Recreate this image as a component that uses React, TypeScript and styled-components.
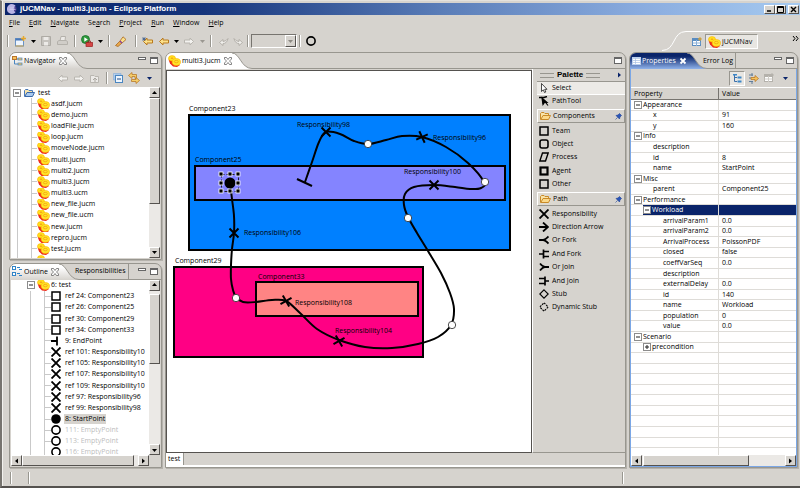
import React from "react";
import styled, { createGlobalStyle, css } from "styled-components";

const face = "#d6d3ce";
const line = "#98968f";
const navy = "#0a246a";

const GlobalStyle = createGlobalStyle`
  * { box-sizing: border-box; }
  html, body { margin: 0; padding: 0; height: 100%; overflow: hidden; }
  body, button, select, table {
    font-family: "Open Sans", Tahoma, sans-serif;
    font-size: 7px;
    line-height: 10px;
    color: #000;
  }
  button { border: 0; padding: 0; margin: 0; background: none; }
  ul { list-style: none; margin: 0; padding: 0; }
  svg { display: block; flex: none; }
`;

/* ---------- window frame ---------- */

const Shell = styled.div`
  display: flex;
  flex-direction: column;
  height: 100vh;
  background: ${face};
  border-top: 1px solid #e4e2dd;
  border-bottom: 2px solid #55524f;
  border-left: 2px solid #77746f;
  padding: 2px 0 0 3px;
  box-shadow: inset 1px 0 0 #f2f1ee;
`;

const TitleBar = styled.header`
  display: flex;
  align-items: center;
  gap: 3px;
  flex: none;
  height: 12px;
  padding: 0 1px 0 2px;
  background: linear-gradient(90deg, ${navy}, #16357c 25%, #5a7db8 55%, #8aacdf 80%, #a6caf0);
  color: #fff;
`;

const Title = styled.h1`
  flex: 1;
  margin: 0;
  font-family: "Liberation Sans", Arial, sans-serif;
  font-size: 8px;
  line-height: 12px;
  font-weight: bold;
  white-space: nowrap;
`;

const raised = css`
  background: ${face};
  border: 1px solid;
  border-color: #fff #55524f #55524f #fff;
`;

const WindowButton = styled.button`
  ${raised}
  display: grid;
  place-items: center;
  width: 11px;
  height: 9px;
`;

const WindowButtons = styled.div`
  display: flex;
  button:last-child { margin-left: 2px; }
`;

const MenuBar = styled.nav`
  display: flex;
  align-items: center;
  flex: none;
  height: 16px;
  padding-left: 4px;
  gap: 9px;
`;

const MenuItem = styled.button`
  u { text-underline-offset: 1px; }
`;

const ToolRow = styled.div`
  display: flex;
  align-items: flex-end;
  flex: none;
  height: 20px;
`;

const Tools = styled.div`
  display: flex;
  align-items: center;
  height: 20px;
  flex: 1;
`;

const Tool = styled.button<{ $w: number }>`
  display: grid;
  place-items: center;
  width: ${(p) => p.$w}px;
  height: 14px;
`;

const Sep = styled.span`
  width: 2px;
  height: 12px;
  margin: 0 2px;
  border-left: 1px solid ${line};
  border-right: 1px solid #fff;
`;

const Combo = styled.label`
  display: flex;
  width: 46px;
  height: 14px;
  border: 1px solid;
  border-color: #77746f #fff #fff #77746f;
  select {
    flex: 1;
    min-width: 0;
    appearance: none;
    border: 0;
    background: ${face};
  }
`;

const ComboArrow = styled.span`
  ${raised}
  display: grid;
  place-items: center;
  width: 11px;
`;

const Perspectives = styled.div`
  display: flex;
  align-items: center;
  height: 20px;
  width: 138px;
`;

const PerspectiveSwoosh = styled.svg`
  width: 24px;
  height: 20px;
`;

const PerspectiveList = styled.div`
  display: flex;
  align-items: center;
  flex: 1;
  height: 20px;
  gap: 3px;
  padding-left: 5px;
  border-top: 1px solid #fff;
`;

const PerspectiveButton = styled.button`
  display: flex;
  align-items: center;
  gap: 1px;
  width: 53px;
  height: 15px;
  padding-left: 2px;
  background: #e8e6e2;
  border: 1px solid;
  border-color: ${line} #fff #fff ${line};
`;

const More = styled.button`
  margin-left: auto;
  align-self: flex-start;
  margin-right: 1px;
`;

/* ---------- workbench ---------- */

const Workbench = styled.main`
  display: grid;
  grid-template-columns: 153px minmax(0, 1fr) 169px;
  gap: 3px;
  flex: 1;
  min-height: 0;
  padding: 1px 2px 1px 4px;
`;

const Stack = styled.div`
  display: flex;
  flex-direction: column;
  gap: 3px;
  min-height: 0;
`;

const Panel = styled.section<{ $grow: number }>`
  display: flex;
  flex-direction: column;
  flex: ${(p) => p.$grow} 1 0;
  min-height: 0;
  min-width: 0;
  overflow: hidden;
  border: 1px solid ${line};
  border-radius: 7px 7px 0 0;
  box-shadow: 1px 1px 0 #b5b2ac;
`;

const PanelBody = styled.div<{ $focus?: boolean }>`
  display: flex;
  flex-direction: column;
  flex: 1;
  min-height: 0;
  border: 1px solid ${(p) => (p.$focus ? "#7ba7e6" : face)};
  border-top: 0;
`;

const TabBar = styled.div`
  display: flex;
  flex: none;
  height: 16px;
`;

const TabFill = styled.div<{ $bg: string }>`
  display: flex;
  align-items: center;
  gap: 1px;
  padding-left: 2px;
  background: ${(p) => p.$bg};
  white-space: nowrap;
`;

const TabLabel = styled.button<{ $light?: boolean }>`
  color: ${(p) => (p.$light ? "#fff" : "#000")};
  white-space: nowrap;
`;

const RestTabs = styled.div`
  display: flex;
  align-items: center;
  flex: 1;
  border-bottom: 1px solid ${line};
`;

const IdleTab = styled.button`
  height: 15px;
  margin-left: -4px;
  padding-right: 2px;
  border-right: 1px solid ${line};
  white-space: nowrap;
`;

const SizeButtons = styled.div`
  display: flex;
  align-items: flex-start;
  gap: 4px;
  margin-left: auto;
  padding-right: 3px;
`;

const ViewTools = styled.div`
  display: flex;
  align-items: center;
  justify-content: flex-end;
  flex: none;
  height: 18px;
  padding-right: 3px;
`;

const Pressed = styled.button`
  display: grid;
  place-items: center;
  width: 16px;
  height: 15px;
  background: #e8e6e2;
  border: 1px solid;
  border-color: ${line} #fff #fff ${line};
`;

/* ---------- scroll bars ---------- */

const Bar = styled.div<{ $dir: "row" | "column" }>`
  display: flex;
  flex-direction: ${(p) => p.$dir};
  flex: none;
  ${(p) => (p.$dir === "row" ? "height: 11px;" : "width: 11px;")}
  background: #ebe9e6;
`;

const BarButton = styled.button`
  ${raised}
  display: grid;
  place-items: center;
  flex: none;
  width: 11px;
  height: 11px;
`;

const Track = styled.div<{ $grow: number }>`
  flex: ${(p) => p.$grow} 1 0;
`;

const Thumb = styled(Track)`
  ${raised}
`;

const arrows = {
  up: "M1 4L3.500 1L6 4Z",
  down: "M1 2L3.500 5L6 2Z",
  left: "M2 3L5 0.500V5.500Z",
  right: "M2 0.500L5 3L2 5.500Z",
};

function Arrow({ to, color = "#000" }: { to: keyof typeof arrows; color?: string }) {
  return (
    <svg width="7" height="6" viewBox="0 0 7 6">
      <path d={arrows[to]} fill={color} />
    </svg>
  );
}

function ScrollBar({ dir, before, thumb, after }: { dir: "row" | "column"; before: number; thumb: number; after: number }) {
  return (
    <Bar $dir={dir}>
      <BarButton aria-label="Scroll back" type="button">
        <Arrow to={dir === "row" ? "left" : "up"} />
      </BarButton>
      <Track $grow={before} />
      <Thumb $grow={thumb} />
      <Track $grow={after} />
      <BarButton aria-label="Scroll forward" type="button">
        <Arrow to={dir === "row" ? "right" : "down"} />
      </BarButton>
    </Bar>
  );
}

/* ---------- icons ---------- */

const JucmIcon = () => (
  <svg width="13" height="12" viewBox="0 0 13 12">
    <path d="M0.500 4.500L2 8.500L5 11.500L9 12L12 10L6 5Z" fill="#ee2a1c" />
    <ellipse cx="4" cy="3.300" rx="3.500" ry="2.700" fill="#ffe21f" stroke="#fbb400" strokeWidth="0.600" />
    <ellipse cx="4" cy="3.200" rx="1.300" ry="0.600" fill="#f59a10" />
    <ellipse cx="8.300" cy="7" rx="4.200" ry="3.400" fill="#ffe52a" stroke="#fbb400" strokeWidth="0.600" />
    <ellipse cx="8.300" cy="6.600" rx="2" ry="1.200" fill="none" stroke="#f5a010" strokeWidth="0.800" />
  </svg>
);

const FolderIcon = ({ blue }: { blue?: boolean }) => (
  <svg width="11" height="10" viewBox="0 0 11 10">
    <path d="M0.500 8.500V2.500L1.500 1.500H4L5 2.500H8.500V4.500" fill="#f9e4a8" stroke={blue ? "#4a78b8" : "#c98a28"} />
    <path d="M0.800 8.500L3 4.500H10.500L8.500 8.500Z" fill={blue ? "#a9c9ee" : "#fbd98a"} stroke={blue ? "#3a68a8" : "#c98a28"} />
  </svg>
);

const CloseX = ({ light }: { light?: boolean }) =>
  light ? (
    <svg width="8" height="8" viewBox="0 0 8 8">
      <path d="M1.500 1.500L6.500 6.500M6.500 1.500L1.500 6.500" stroke="#fff" strokeWidth="1.800" />
    </svg>
  ) : (
    <svg width="8" height="8" viewBox="0 0 8 8">
      <path
        d="M0.500 0.500H2.500L4 2.500L5.500 0.500H7.500V2L5.500 4L7.500 6V7.500H5.500L4 5.500L2.500 7.500H0.500V6L2.500 4L0.500 2Z"
        fill="#fff"
        stroke="#666"
        strokeWidth="0.800"
      />
    </svg>
  );

const MinIcon = () => (
  <svg width="8" height="9" viewBox="0 0 8 9">
    <rect x="0.500" y="1.500" width="7" height="2" fill="#fff" stroke="#666" />
  </svg>
);

const MaxIcon = () => (
  <svg width="8" height="9" viewBox="0 0 8 9">
    <rect x="0.500" y="1.500" width="7" height="6" fill="#fff" stroke="#666" />
    <path d="M0.500 2.500H7.500" stroke="#666" />
  </svg>
);

const NavArrow = ({ back, color = "#b9b6b0", fill = "#f3f2ef", star }: { back?: boolean; color?: string; fill?: string; star?: boolean }) => (
  <svg width="12" height="9" viewBox="0 0 12 9">
    <path
      d={back ? "M1.500 4.500L5 1V3H10.500V6H5V8Z" : "M10.500 4.500L7 1V3H1.500V6H7V8Z"}
      fill={fill}
      stroke={color}
    />
    {star && <path d="M2 0V4M0 2H4M0.500 0.500L3.500 3.500M3.500 0.500L0.500 3.500" stroke="#2e5288" strokeWidth="0.600" />}
  </svg>
);

const HierarchyIcon = () => (
  <svg width="11" height="10" viewBox="0 0 11 10">
    <path d="M2.500 3V8H6M2.500 3H6" fill="none" stroke="#4a86c0" />
    <rect x="0.500" y="0.500" width="4" height="3" fill="#f6c35e" stroke="#b9742a" />
    <rect x="6" y="2" width="4" height="2" fill="#f6c35e" stroke="#4a86c0" strokeWidth="0.700" />
    <rect x="6" y="7" width="4" height="2" fill="#f6c35e" stroke="#4a86c0" strokeWidth="0.700" />
  </svg>
);

const TreeListIcon = () => (
  <svg width="9" height="9" viewBox="0 0 9 9">
    <path d="M1.500 0V7.500H4M1.500 3.500H4" fill="none" stroke="#3b6ea8" />
    <path d="M4.500 3.500H8.500M4.500 7.500H8.500M0 0.500H4" stroke="#3b86c8" strokeWidth="2" />
  </svg>
);

const OutlineIcon = () => (
  <svg width="11" height="11" viewBox="0 0 11 11">
    <rect x="0.500" y="0.500" width="3" height="3" fill="#fff" stroke="#2f84c8" />
    <rect x="0.500" y="6.500" width="3" height="3" fill="#fff" stroke="#2f84c8" />
    <path d="M5 1.500H8M7 3.500H10M5 7.500H8M7 9.500H10" stroke="#2f84c8" />
  </svg>
);

const CollapseIcon = () => (
  <svg width="10" height="10" viewBox="0 0 10 10">
    <path d="M0.500 0.500H8V2H2V7H0.500Z" fill="#bcd6f2" stroke="#7fa8d6" strokeWidth="0.600" />
    <rect x="2.500" y="2.500" width="7" height="7" fill="#eef5fd" stroke="#4a86c0" />
    <path d="M4 6H8" stroke="#1d4a88" />
  </svg>
);

const LinkIcon = () => (
  <svg width="12" height="12" viewBox="0 0 12 12">
    <path d="M0.500 3.500L4 0.500V2.500H8.500V6.500H7V4.500H4V6.500Z" fill="#f6cf6a" stroke="#b97a2a" strokeWidth="0.800" />
    <path d="M11.500 8.500L8 5.500V7.500H3.500V9.500H8V11.500Z" fill="#f6cf6a" stroke="#b97a2a" strokeWidth="0.800" />
  </svg>
);

const UpFolderIcon = () => (
  <svg width="10" height="9" viewBox="0 0 10 9">
    <path d="M0.500 8.500V1.500H4L5 2.500H8.500V8.500Z" fill="#eceae7" stroke="#b9b6b0" />
    <path d="M5 8V4M3 6L5 4L7 6" fill="none" stroke="#aaa7a1" />
  </svg>
);

const NewIcon = () => (
  <svg width="12" height="11" viewBox="0 0 12 11">
    <rect x="1.500" y="2.500" width="8" height="7.500" fill="#eef5fd" stroke="#6a93c4" />
    <path d="M1.500 3.500H9.500" stroke="#4a78b8" strokeWidth="2" />
    <path d="M1.500 10H9.500" stroke="#c9a24a" />
    <path d="M9.500 0V5M7 2.500H12" stroke="#e5a82c" strokeWidth="1.500" />
  </svg>
);

const SaveIcon = () => (
  <svg width="10" height="10" viewBox="0 0 10 10">
    <path d="M0.500 0.500H9.500V9.500H0.500Z" fill="#c6c3be" stroke="#aeaba5" />
    <path d="M2.500 1H7.500V4H2.500ZM3 6H7V9.500H3Z" fill="#eceae7" />
  </svg>
);

const PrintIcon = () => (
  <svg width="11" height="10" viewBox="0 0 11 10">
    <path d="M3 5L4 0.500H8.500L8 5" fill="#eceae7" stroke="#b4b1ab" />
    <path d="M0.500 5.500L2 4.500H9L10.500 5.500V8.500H0.500Z" fill="#d0cdc8" stroke="#b4b1ab" />
  </svg>
);

const RunIcon = () => (
  <svg width="12" height="12" viewBox="0 0 12 12">
    <circle cx="4.500" cy="4.500" r="4" fill="#2f9a3c" stroke="#15702a" strokeWidth="0.800" />
    <path d="M3.300 2.300V6.700L6.800 4.500Z" fill="#fff" />
    <rect x="5" y="7.500" width="6.500" height="4" fill="#d64545" stroke="#9a1f1f" strokeWidth="0.700" />
    <path d="M7 7.500V6H9.500V7.500" fill="none" stroke="#9a1f1f" strokeWidth="0.800" />
  </svg>
);

const TorchIcon = () => (
  <svg width="12" height="11" viewBox="0 0 12 11">
    <path d="M0.500 9.500L5 5L7 7L3 10.500Z" fill="#e9a94e" stroke="#a8681f" strokeWidth="0.800" />
    <path d="M5 5L8 0.800L11 3.500L7 7Z" fill="#fbe08a" stroke="#a8681f" strokeWidth="0.800" />
    <path d="M5 5L7 7" stroke="#8a3fa0" strokeWidth="1.200" />
  </svg>
);

const UndoIcon = ({ flip }: { flip?: boolean }) => (
  <svg width="10" height="9" viewBox="0 0 10 9">
    <path
      d={flip ? "M1 1.500Q3 4.500 6 4.500V2.500L9.500 5.500L6 8.500V6.500Q2 6.500 1 1.500Z" : "M9 1.500Q7 4.500 4 4.500V2.500L0.500 5.500L4 8.500V6.500Q8 6.500 9 1.500Z"}
      fill="#f0efec"
      stroke="#a9a6a0"
      strokeWidth="0.800"
    />
  </svg>
);

const GridIcon = ({ dim }: { dim?: boolean }) => (
  <svg width="10" height="10" viewBox="0 0 10 10">
    <rect x="0.500" y="1.500" width="8" height="7" fill="#fff" stroke={dim ? "#b4b1ab" : "#5a8cc0"} />
    <path d="M0.500 3H8.500" stroke={dim ? "#b4b1ab" : "#5a8cc0"} strokeWidth="2" />
    <path d="M4.500 3V9M0.500 6H8.500" stroke={dim ? "#cfccc7" : "#8ab0d8"} />
    <path d="M8 0V4M6 2H10" stroke={dim ? "#b4b1ab" : "#e0a52e"} />
  </svg>
);

const TableIcon = () => (
  <svg width="9" height="8" viewBox="0 0 9 8">
    <rect x="0.500" y="0.500" width="8" height="7" fill="#fff" stroke="#bcd0ee" />
    <path d="M1 1.500H8M3.500 1V7M1 3.500H8M1 5.500H8" stroke="#a8c0e4" strokeWidth="0.700" />
  </svg>
);

const FilterIcon = () => (
  <svg width="11" height="11" viewBox="0 0 11 11">
    <path d="M1 2H5M1 5H3M1 8.500H5M4 0V3M4 8V11" stroke="#5f7d9c" />
    <path d="M3 4.500H7V2.500L10.500 5.500L7 8.500V6.500H3Z" fill="#f6c35e" stroke="#b97a2a" strokeWidth="0.800" />
  </svg>
);

const EclipseIcon = () => (
  <svg width="10" height="10" viewBox="0 0 10 10">
    <circle cx="5" cy="5" r="4.500" fill="#4b3d8f" />
    <path d="M8.500 1.500A5 5 0 1 0 8.500 8.500A4.300 4.300 0 0 1 8.500 1.500Z" fill="#b9b4e4" />
    <path d="M3 4H8M2.500 5.500H8.500" stroke="#d8d4f2" strokeWidth="0.700" />
  </svg>
);

const PinIcon = () => (
  <svg width="7" height="7" viewBox="0 0 7 7">
    <path d="M0.500 6.500L2.500 4.500M1 2.500L4.500 6L5 4L6.500 2.500L4.500 0.500L3 2Z" fill="#2b56b8" stroke="#1c3f96" strokeWidth="0.600" />
  </svg>
);

type Glyph =
  | "square" | "round" | "slant" | "thick" | "x" | "arrow" | "orFork" | "andFork"
  | "orJoin" | "andJoin" | "stub" | "dynStub" | "end" | "dot" | "ring" | "cursor" | "pathTool";

const glyphs: Record<Glyph, React.ReactNode> = {
  square: <rect x="1" y="1" width="8" height="8" strokeWidth="1.500" />,
  round: <rect x="1" y="1" width="8" height="8" rx="2" strokeWidth="1.600" />,
  slant: <path d="M3.500 1H9.200L6.500 9H0.800Z" strokeWidth="1.400" />,
  thick: <rect x="1.500" y="1.500" width="7" height="7" strokeWidth="2.200" />,
  x: <path d="M0.500 0.500L9.500 9.500M9.500 0.500L0.500 9.500" strokeWidth="1.900" />,
  arrow: <path d="M0 5H9M4 0.500L9 5L4 9.500" strokeWidth="1.800" />,
  orFork: <path d="M0 5H4Q6 5 9.500 1.500M4 5Q6 5 9.500 8.500" strokeWidth="1.800" />,
  andFork: <path d="M0 5H4M4.500 0.500V9.500M4.500 2.500H10M4.500 7.500H10" strokeWidth="1.700" />,
  orJoin: <path d="M10 5H6Q4 5 1 1.500M6 5Q4 5 1 8.500" strokeWidth="1.800" />,
  andJoin: <path d="M10 5H6M6 0.500V9.500M6 2.500H0M6 7.500H0" strokeWidth="1.700" />,
  stub: <path d="M5 0.800L9.200 5L5 9.200L0.800 5Z" strokeWidth="1.100" />,
  dynStub: <path d="M5 0.800L9.200 5L5 9.200L0.800 5Z" strokeWidth="1.100" strokeDasharray="2 1" />,
  end: <path d="M0 5H6M6 0.500V9.500" strokeWidth="1.800" />,
  dot: <circle cx="5" cy="5" r="4.800" fill="#000" stroke="none" />,
  ring: <circle cx="5" cy="5" r="4.100" strokeWidth="1.600" />,
  cursor: <path d="M2.500 0.500V8.500L4.300 6.800L5.500 9.500L6.800 9L5.700 6.300H8Z" fill="#fff" strokeWidth="0.700" />,
  pathTool: (
    <>
      <path d="M3 2L9 9.500M3 2L4 8.500L5.500 6.500L8 6.500Z" fill="#000" strokeWidth="1.200" />
      <path d="M0 1.500H5L8 0.500" strokeWidth="1.500" />
    </>
  ),
};

const GlyphIcon = ({ kind }: { kind: Glyph }) => (
  <svg width="10" height="10" viewBox="0 0 10 10" fill="none" stroke="#000">
    {glyphs[kind]}
  </svg>
);

/* ---------- trees ---------- */

const TreeArea = styled.div`
  display: flex;
  flex: 1;
  min-height: 0;
  background: #fff;
`;

const Tree = styled.ul`
  display: flex;
  flex-direction: column;
  flex: 1;
  min-width: 0;
  overflow: hidden;
`;

const TreeRow = styled.li<{ $clip?: number }>`
  display: flex;
  flex: ${(p) => (p.$clip ? `0 0 ${p.$clip}px` : "1 1 0")};
  align-items: ${(p) => (p.$clip ? "flex-start" : "center")};
  min-height: 0;
  overflow: hidden;
  padding-left: 6px;
  white-space: nowrap;
`;

const RootRow = styled(TreeRow)`
  padding-left: 2px;
`;

const Guide = styled.span<{ $w: number; $stub?: boolean }>`
  flex: none;
  align-self: stretch;
  width: ${(p) => p.$w}px;
  border-left: 1px solid #c9c9c9;
  background: ${(p) => (p.$stub ? "linear-gradient(#c9c9c9, #c9c9c9) center / 100% 1px no-repeat" : "none")};
`;

const Indent = styled.span<{ $w: number }>`
  flex: none;
  width: ${(p) => p.$w}px;
`;

const Expander = ({ plus }: { plus?: boolean }) => (
  <svg width="8" height="8" viewBox="0 0 8 8">
    <rect x="0.500" y="0.500" width="7" height="7" fill="#fff" stroke="#8c8c8c" />
    <path d={plus ? "M2 4H6M4 2V6" : "M2 4H6"} stroke="#222" />
  </svg>
);

const TreeText = styled.span<{ $picked?: boolean; $dim?: boolean }>`
  padding: 0 1px;
  color: ${(p) => (p.$dim ? "#bdbdbd" : "#000")};
  background: ${(p) => (p.$picked ? face : "transparent")};
`;

const files = [
  "asdf.jucm", "demo.jucm", "loadFile.jucm", "loop.jucm", "moveNode.jucm", "multi.jucm", "multi2.jucm",
  "multi3.jucm", "multi3.ucm", "new_file.jucm", "new_file.ucm", "new.jucm", "repro.jucm", "test.jucm",
];

const outline: { kind: Glyph; text: string; dim?: boolean; picked?: boolean }[] = [
  { kind: "square", text: "ref 24: Component23" },
  { kind: "square", text: "ref 26: Component25" },
  { kind: "square", text: "ref 30: Component29" },
  { kind: "square", text: "ref 34: Component33" },
  { kind: "end", text: "9: EndPoint" },
  { kind: "x", text: "ref 101: Responsibility10" },
  { kind: "x", text: "ref 105: Responsibility10" },
  { kind: "x", text: "ref 107: Responsibility10" },
  { kind: "x", text: "ref 109: Responsibility10" },
  { kind: "x", text: "ref 97: Responsibility96" },
  { kind: "x", text: "ref 99: Responsibility98" },
  { kind: "dot", text: "8: StartPoint", picked: true },
  { kind: "ring", text: "111: EmptyPoint", dim: true },
  { kind: "ring", text: "113: EmptyPoint", dim: true },
];

/* ---------- tab header ---------- */

const paperTab = `linear-gradient(#ffffff 20%, ${face})`;

function TabHead(props: {
  icon: React.ReactNode;
  label: string;
  tone?: "paper" | "white" | "blue";
  next?: string;
  onlyMax?: boolean;
}) {
  const tone = props.tone ?? "paper";
  const id = `tab-${tone}`;
  const stops = tone === "paper" ? ["#fff", face] : tone === "white" ? ["#fff", "#fff"] : [navy, "#8fb2ea"];
  const bg = tone === "paper" ? paperTab : tone === "white" ? "#fff" : `linear-gradient(${navy} 20%, #8fb2ea)`;
  return (
    <TabBar role="tablist">
      <TabFill $bg={bg}>
        {props.icon}
        <TabLabel $light={tone === "blue"} role="tab" aria-selected="true" type="button">{props.label}</TabLabel>
        <Indent $w={1} />
        <button aria-label={`Close ${props.label}`} type="button"><CloseX light={tone === "blue"} /></button>
      </TabFill>
      <svg width="20" height="16" viewBox="0 0 20 16">
        <defs>
          <linearGradient id={id} gradientUnits="userSpaceOnUse" x1="0" y1="0" x2="0" y2="16">
            <stop offset="0.200" stopColor={stops[0]} />
            <stop offset="1" stopColor={stops[1]} />
          </linearGradient>
        </defs>
        <path d="M0 0C8 0 9 15.500 20 15.500V16H0Z" fill={`url(#${id})`} />
        <path d="M0 0C8 0 9 15.500 20 15.500" fill="none" stroke={line} />
      </svg>
      <RestTabs>
        {props.next && <IdleTab role="tab" aria-selected="false" type="button">{props.next}</IdleTab>}
        <SizeButtons>
          {!props.onlyMax && <button aria-label="Minimize view" type="button"><MinIcon /></button>}
          <button aria-label="Maximize view" type="button"><MaxIcon /></button>
        </SizeButtons>
      </RestTabs>
    </TabBar>
  );
}

/* ---------- editor ---------- */

const EditorArea = styled.div`
  display: flex;
  flex: 1;
  min-height: 0;
  padding-top: 1px;
`;

const Canvas = styled.div`
  flex: 1;
  min-width: 0;
  background: #fff;
  border: 1px solid #55524f;
  overflow: hidden;
  svg { width: 100%; height: 100%; }
`;

const PageTabs = styled.div`
  display: flex;
  flex: none;
  height: 14px;
  border-bottom: 2px solid #fff;
  button {
    height: 12px;
    padding: 0 3px 0 2px;
    background: #fff;
    border-right: 1px solid ${line};
  }
`;

const Palette = styled.aside`
  display: flex;
  flex-direction: column;
  flex: none;
  width: 93px;
  margin-top: -1px;
  padding-left: 4px;
  border-left: 1px solid #fff;
  border-bottom: 1px solid ${line};
`;

const PaletteHead = styled.div`
  display: flex;
  align-items: center;
  gap: 3px;
  height: 12px;
  padding: 0 2px 0 3px;
  font-family: "Liberation Sans", Arial, sans-serif;
  font-size: 8px;
  font-weight: bold;
  svg { margin-left: auto; }
`;

const Grip = styled.span`
  width: 14px;
  height: 5px;
  border-top: 1px solid ${line};
  border-bottom: 1px solid ${line};
`;

const Drawer = styled.h2`
  display: flex;
  align-items: center;
  gap: 2px;
  height: 14px;
  margin: 1px 0;
  padding: 0 2px;
  font-size: 7px;
  line-height: 10px;
  font-weight: normal;
  background: linear-gradient(90deg, #e0dcd2, ${face} 40%);
  border: 1px solid;
  border-color: #fff ${line} ${line} #fff;
  svg:last-child { margin-left: auto; }
`;

const PaletteList = styled.ul<{ $height: number }>`
  display: grid;
  grid-auto-rows: 1fr;
  height: ${(p) => p.$height}px;
`;

const PaletteItem = styled.button<{ $on?: boolean }>`
  display: flex;
  align-items: center;
  gap: 3px;
  width: 100%;
  height: 100%;
  padding-left: 2px;
  white-space: nowrap;
  ${(p) => p.$on && css`
    background: #eceae6;
    box-shadow: inset 0 1px 0 ${line}, inset 0 -1px 0 #fff;
  `}
`;

const DrawerGroup = ({ items, height, on }: { items: [Glyph, string][]; height: number; on?: string }) => (
  <PaletteList $height={height}>
    {items.map(([kind, text]) => (
      <li key={text}>
        <PaletteItem $on={text === on} type="button">
          <GlyphIcon kind={kind} />
          {text}
        </PaletteItem>
      </li>
    ))}
  </PaletteList>
);

type Pt = [number, number];

const route: Pt[] = [
  [230, 182], [232, 198], [234, 215], [234, 232], [232, 248], [231, 264], [231, 278], [233, 289], [236, 296],
  [243, 301], [256, 301], [272, 299], [286, 300], [300, 312], [317, 328], [339, 339], [365, 346], [392, 347],
  [418, 343], [438, 336], [451, 324], [454, 308], [450, 292], [441, 272], [428, 250], [417, 232], [408, 216],
  [404, 204], [405, 193], [414, 186], [434, 184], [455, 186], [470, 188], [481, 187], [484, 181], [468, 162],
  [446, 146], [422, 136], [402, 135], [386, 139], [368, 143], [354, 140], [340, 133], [326, 131], [319, 141],
  [312, 161], [305, 181],
];

/** Catmull-Rom spline through the points, written as cubic Béziers. */
function smooth(points: Pt[]): string {
  let d = `M${points[0][0]} ${points[0][1]}`;
  for (let i = 0; i < points.length - 1; i++) {
    const a = points[Math.max(i - 1, 0)];
    const b = points[i];
    const c = points[i + 1];
    const e = points[Math.min(i + 2, points.length - 1)];
    d += `C${b[0] + (c[0] - a[0]) / 6} ${b[1] + (c[1] - a[1]) / 6} ${c[0] - (e[0] - b[0]) / 6} ${c[1] - (e[1] - b[1]) / 6} ${c[0]} ${c[1]}`;
  }
  return d;
}

const components = [
  { name: "Component23", x: 189, y: 114, w: 321, h: 135, fill: "#0080ff", tx: 189, ty: 110 },
  { name: "Component25", x: 195, y: 165, w: 310, h: 34, fill: "#8484ff", tx: 195, ty: 161 },
  { name: "Component29", x: 174, y: 266, w: 249, h: 90, fill: "#ff0084", tx: 175, ty: 262 },
  { name: "Component33", x: 256, y: 281, w: 162, h: 34, fill: "#ff8484", tx: 258, ty: 278 },
];

const marks = [
  { name: "Responsibility98", x: 326, y: 131, tx: 297, ty: 126, a: 0 },
  { name: "Responsibility96", x: 422, y: 136, tx: 433, ty: 139, a: 20 },
  { name: "Responsibility100", x: 434, y: 184, tx: 404, ty: 173, a: 0 },
  { name: "Responsibility106", x: 234, y: 232, tx: 244, ty: 234, a: 0 },
  { name: "Responsibility108", x: 286, y: 300, tx: 295, ty: 304, a: 15 },
  { name: "Responsibility104", x: 339, y: 340, tx: 335, ty: 332, a: 15 },
];

const empties: Pt[] = [[368, 143], [485, 181], [408, 217], [236, 297], [452, 324]];

const Diagram = () => (
  <svg role="img" aria-label="Use case map" fontSize="7">
    <g transform="translate(-167 -70)">
      {components.map((c) => (
        <g key={c.name}>
          <rect x={c.x} y={c.y} width={c.w} height={c.h} fill={c.fill} stroke="#000" strokeWidth="2" />
          <text x={c.tx} y={c.ty}>{c.name}</text>
        </g>
      ))}
      <path d={smooth(route)} fill="none" stroke="#000" strokeWidth="2" />
      <path d="M297 178L312 185" stroke="#000" strokeWidth="2" />
      {marks.map((m) => (
        <g key={m.name}>
          <path
            d="M-4.500 -4.500L4.500 4.500M4.500 -4.500L-4.500 4.500"
            transform={`translate(${m.x} ${m.y}) rotate(${m.a})`}
            stroke="#000"
            strokeWidth="2"
          />
          <text x={m.tx} y={m.ty}>{m.name}</text>
        </g>
      ))}
      {empties.map(([x, y]) => (
        <circle key={`${x}-${y}`} cx={x} cy={y} r="3.700" fill="#fff" stroke="#222" strokeWidth="0.800" />
      ))}
      <circle cx="230" cy="182" r="5.500" />
      <rect x="221.500" y="173.500" width="17" height="17" fill="none" stroke="#222" strokeDasharray="3 2" />
      {[221, 230, 238].map((x) =>
        [173, 182, 190].map((y) =>
          x === 230 && y === 182 ? null : (
            <rect key={`${x}-${y}`} x={x - 2} y={y - 2} width="4" height="4" fill="#000" stroke="#fff" strokeWidth="0.800" />
          ),
        ),
      )}
    </g>
  </svg>
);

/* ---------- properties ---------- */

const Sheet = styled.table`
  display: flex;
  flex-direction: column;
  flex: 1;
  min-height: 0;
  overflow: hidden;
  background: #fff;
  thead { flex: none; }
  tbody { display: flex; flex-direction: column; flex: 1; min-height: 0; }
`;

const HeadRow = styled.tr`
  display: flex;
  height: 13px;
  background: ${face};
  border-top: 1px solid #fff;
  border-bottom: 1px solid #77746f;
  th {
    padding: 1px 0 0 3px;
    font-weight: normal;
    text-align: left;
  }
  th:first-child { width: 88px; border-right: 1px solid #77746f; }
`;

const PropRow = styled.tr<{ $picked?: boolean; $clip?: boolean }>`
  display: flex;
  flex: ${(p) => (p.$clip ? "0 0 7px" : "1 1 0")};
  min-height: 0;
  border-bottom: ${(p) => (p.$clip ? "0" : "1px solid #dedcd8")};
  td {
    display: flex;
    align-items: center;
    padding: 0;
    white-space: nowrap;
    ${(p) => p.$picked && css`background: ${navy}; color: #fff;`}
  }
  td:first-child { width: 88px; border-right: 1px solid #dedcd8; }
  td:last-child { flex: 1; padding-left: 3px; }
`;

const PropName = styled.span<{ $indent: number }>`
  display: flex;
  align-items: center;
  align-self: stretch;
  gap: 1px;
  padding-left: ${(p) => p.$indent}px;
`;

const Unfilled = styled.span<{ $w: number }>`
  align-self: stretch;
  width: ${(p) => p.$w}px;
  background: #fff;
`;

type Prop = [depth: number, name: string, value?: string, box?: "-" | "+"];

const props: Prop[] = [
  [0, "Appearance", "", "-"],
  [1, "x", "91"],
  [1, "y", "160"],
  [0, "Info", "", "-"],
  [1, "description"],
  [1, "id", "8"],
  [1, "name", "StartPoint"],
  [0, "Misc", "", "-"],
  [1, "parent", "Component25"],
  [0, "Performance", "", "-"],
  [1, "Workload", "", "-"],
  [2, "arrivalParam1", "0.0"],
  [2, "arrivalParam2", "0.0"],
  [2, "ArrivalProcess", "PoissonPDF"],
  [2, "closed", "false"],
  [2, "coeffVarSeq", "0.0"],
  [2, "description"],
  [2, "externalDelay", "0.0"],
  [2, "id", "140"],
  [2, "name", "Workload"],
  [2, "population", "0"],
  [2, "value", "0.0"],
  [0, "Scenario", "", "-"],
  [1, "precondition", "", "+"],
];

const blankRows = Array.from({ length: 9 }, (_, i) => i);

const PropsTable = () => (
  <Sheet>
    <thead>
      <HeadRow><th scope="col">Property</th><th scope="col">Value</th></HeadRow>
    </thead>
    <tbody>
      {props.map(([depth, name, value, box], i) => {
        const picked = name === "Workload" && !!box;
        return (
          <PropRow key={i} $picked={picked}>
            <td>
              {picked ? (
                <>
                  <Unfilled $w={12} />
                  <Expander />
                  <PropName $indent={1}>{name}</PropName>
                </>
              ) : (
                <PropName $indent={box ? 3 + depth * 9 : 12 + depth * 10}>
                  {box && <Expander plus={box === "+"} />}
                  {name}
                </PropName>
              )}
            </td>
            <td>{value}</td>
          </PropRow>
        );
      })}
      {blankRows.map((i) => <PropRow key={`blank-${i}`}><td /><td /></PropRow>)}
      <PropRow $clip><td /><td /></PropRow>
    </tbody>
  </Sheet>
);

/* ---------- status bar ---------- */

const StatusBar = styled.footer`
  display: flex;
  align-items: center;
  flex: none;
  height: 17px;
  padding-left: 3px;
  gap: 12px;
`;

const StatusFill = styled.span`
  flex: 1;
`;

const StatusEnd = styled.span`
  width: 162px;
`;

const HScrollRow = styled.div`
  display: flex;
  flex: none;
  background: ${face};
  > div:first-child { flex: 1; }
`;

const menus = [["", "F", "ile"], ["", "E", "dit"], ["", "N", "avigate"], ["Se", "a", "rch"], ["", "P", "roject"], ["", "R", "un"], ["", "W", "indow"], ["", "H", "elp"]];

export default function App() {
  return (
    <>
      <GlobalStyle />
      <Shell>
        <TitleBar>
          <EclipseIcon />
          <Title>jUCMNav - multi3.jucm - Eclipse Platform</Title>
          <WindowButtons>
            <WindowButton aria-label="Minimize" type="button">
              <svg width="7" height="6"><path d="M1 5H5" stroke="#000" strokeWidth="1.500" /></svg>
            </WindowButton>
            <WindowButton aria-label="Maximize" type="button">
              <svg width="7" height="7"><path d="M0.500 0.500H6.500V6.500H0.500ZM0.500 1.500H6.500" fill="none" stroke="#000" /></svg>
            </WindowButton>
            <WindowButton aria-label="Close" type="button">
              <svg width="7" height="7"><path d="M1 1L6 6M6 1L1 6" stroke="#000" strokeWidth="1.400" /></svg>
            </WindowButton>
          </WindowButtons>
        </TitleBar>

        <MenuBar aria-label="Main menu">
          {menus.map(([a, key, b]) => (
            <MenuItem key={a + key + b} type="button">{a}<u>{key}</u>{b}</MenuItem>
          ))}
        </MenuBar>

        <ToolRow>
          <Tools>
            <Sep />
            <Tool $w={18} aria-label="New" type="button"><NewIcon /></Tool>
            <Tool $w={8} aria-label="New menu" type="button"><Arrow to="down" /></Tool>
            <Tool $w={17} aria-label="Save" type="button"><SaveIcon /></Tool>
            <Tool $w={16} aria-label="Print" type="button"><PrintIcon /></Tool>
            <Indent $w={2} />
            <Sep />
            <Tool $w={18} aria-label="Run" type="button"><RunIcon /></Tool>
            <Tool $w={8} aria-label="Run menu" type="button"><Arrow to="down" /></Tool>
            <Indent $w={2} />
            <Sep />
            <Tool $w={18} aria-label="Search" type="button"><TorchIcon /></Tool>
            <Indent $w={3} />
            <Sep />
            <Tool $w={17} aria-label="Last edit location" type="button"><NavArrow back star fill="#fbe08a" color="#b97a1e" /></Tool>
            <Tool $w={15} aria-label="Back" type="button"><NavArrow back fill="#fbe08a" color="#b97a1e" /></Tool>
            <Tool $w={11} aria-label="Back menu" type="button"><Arrow to="down" /></Tool>
            <Tool $w={14} aria-label="Forward" type="button"><NavArrow /></Tool>
            <Tool $w={12} aria-label="Forward menu" type="button"><Arrow to="down" color="#9a9791" /></Tool>
            <Sep />
            <Indent $w={2} />
            <Tool $w={15} aria-label="Undo" type="button"><UndoIcon /></Tool>
            <Tool $w={14} aria-label="Redo" type="button"><UndoIcon flip /></Tool>
            <Sep />
            <Combo>
              <select aria-label="Zoom" disabled />
              <ComboArrow><Arrow to="down" color="#8c8983" /></ComboArrow>
            </Combo>
            <Sep />
            <Tool $w={16} aria-label="Start point" type="button"><GlyphIcon kind="ring" /></Tool>
          </Tools>
          <Perspectives>
            <PerspectiveSwoosh viewBox="0 0 24 20">
              <path d="M0 19.500C14 19.500 10 0.500 24 0.500" fill="none" stroke="#fff" />
            </PerspectiveSwoosh>
            <PerspectiveList>
              <Tool $w={11} aria-label="Open perspective" type="button"><GridIcon /></Tool>
              <PerspectiveButton type="button"><JucmIcon />jUCMNav</PerspectiveButton>
              <More aria-label="More perspectives" type="button">
                <svg width="7" height="12"><path d="M1 4L3 6.500L1 9M4 4L6 6.500L4 9" fill="none" stroke="#000" /></svg>
              </More>
            </PerspectiveList>
          </Perspectives>
        </ToolRow>

        <Workbench>
          <Stack>
            <Panel $grow={207}>
              <TabHead icon={<HierarchyIcon />} label="Navigator" />
              <PanelBody>
                <ViewTools>
                  <Tool $w={16} aria-label="Back" type="button"><NavArrow back /></Tool>
                  <Tool $w={16} aria-label="Forward" type="button"><NavArrow /></Tool>
                  <Tool $w={16} aria-label="Up" type="button"><UpFolderIcon /></Tool>
                  <Indent $w={1} />
                  <Sep />
                  <Tool $w={16} aria-label="Collapse all" type="button"><CollapseIcon /></Tool>
                  <Tool $w={16} aria-label="Link with editor" type="button"><LinkIcon /></Tool>
                  <Tool $w={15} aria-label="View menu" type="button"><Arrow to="down" color={navy} /></Tool>
                </ViewTools>
                <TreeArea>
                  <Tree>
                    <RootRow>
                      <Expander />
                      <Indent $w={3} />
                      <FolderIcon blue />
                      <Indent $w={2} />
                      <TreeText>test</TreeText>
                    </RootRow>
                    {files.map((name) => (
                      <TreeRow key={name}>
                        <Guide $w={14} />
                        <Guide $w={6} $stub />
                        <JucmIcon />
                        <TreeText>{name}</TreeText>
                      </TreeRow>
                    ))}
                    <TreeRow $clip={3}>
                      <Guide $w={14} />
                      <Guide $w={6} />
                      <JucmIcon />
                    </TreeRow>
                  </Tree>
                  <ScrollBar dir="column" before={0} thumb={106} after={43} />
                </TreeArea>
              </PanelBody>
            </Panel>

            <Panel $grow={205}>
              <TabHead icon={<OutlineIcon />} label="Outline" next="Responsibilities" />
              <PanelBody>
                <TreeArea>
                  <Tree>
                    <TreeRow>
                      <Indent $w={10} />
                      <Expander />
                      <Indent $w={2} />
                      <JucmIcon />
                      <TreeText>6: test</TreeText>
                    </TreeRow>
                    {outline.map((o) => (
                      <TreeRow key={`${o.kind} ${o.text}`}>
                        <Indent $w={13} />
                        <Guide $w={14} />
                        <Guide $w={7} $stub />
                        <GlyphIcon kind={o.kind} />
                        <Indent $w={3} />
                        <TreeText $dim={o.dim} $picked={o.picked}>{o.text}</TreeText>
                      </TreeRow>
                    ))}
                    <TreeRow $clip={8}>
                      <Indent $w={13} />
                      <Guide $w={14} />
                      <Guide $w={7} />
                      <GlyphIcon kind="ring" />
                      <Indent $w={3} />
                      <TreeText $dim>116: EmptyPoint</TreeText>
                    </TreeRow>
                  </Tree>
                  <ScrollBar dir="column" before={4} thumb={69} after={81} />
                </TreeArea>
                <HScrollRow>
                  <ScrollBar dir="row" before={0} thumb={112} after={4} />
                  <Indent $w={11} />
                </HScrollRow>
              </PanelBody>
            </Panel>
          </Stack>

          <Panel $grow={1}>
            <TabHead tone="white" icon={<JucmIcon />} label="multi3.jucm" onlyMax />
            <EditorArea>
              <Canvas><Diagram /></Canvas>
              <Palette>
                <PaletteHead><Grip />Palette<Grip /><Arrow to="right" color={navy} /></PaletteHead>
                <DrawerGroup height={27} on="Select" items={[["cursor", "Select"], ["pathTool", "PathTool"]]} />
                <Drawer><FolderIcon />Components<PinIcon /></Drawer>
                <DrawerGroup
                  height={67}
                  items={[["square", "Team"], ["round", "Object"], ["slant", "Process"], ["thick", "Agent"], ["square", "Other"]]}
                />
                <Drawer><FolderIcon />Path<PinIcon /></Drawer>
                <DrawerGroup
                  height={107}
                  items={[
                    ["x", "Responsibility"], ["arrow", "Direction Arrow"], ["orFork", "Or Fork"], ["andFork", "And Fork"],
                    ["orJoin", "Or Join"], ["andJoin", "And Join"], ["stub", "Stub"], ["dynStub", "Dynamic Stub"],
                  ]}
                />
              </Palette>
            </EditorArea>
            <PageTabs><button type="button">test</button></PageTabs>
          </Panel>

          <Panel $grow={1}>
            <TabHead tone="blue" icon={<TableIcon />} label="Properties" next="Error Log" />
            <PanelBody $focus>
              <ViewTools>
                <Pressed aria-label="Show categories" type="button"><TreeListIcon /></Pressed>
                <Tool $w={16} aria-label="Show advanced properties" type="button"><FilterIcon /></Tool>
                <Tool $w={16} aria-label="Restore default" type="button"><GridIcon dim /></Tool>
                <Tool $w={16} aria-label="View menu" type="button"><Arrow to="down" color={navy} /></Tool>
              </ViewTools>
              <PropsTable />
              <ScrollBar dir="row" before={1} thumb={104} after={36} />
            </PanelBody>
          </Panel>
        </Workbench>

        <StatusBar>
          <Sep />
          <Sep />
          <StatusFill />
          <Sep />
          <StatusEnd />
        </StatusBar>
      </Shell>
    </>
  );
}
